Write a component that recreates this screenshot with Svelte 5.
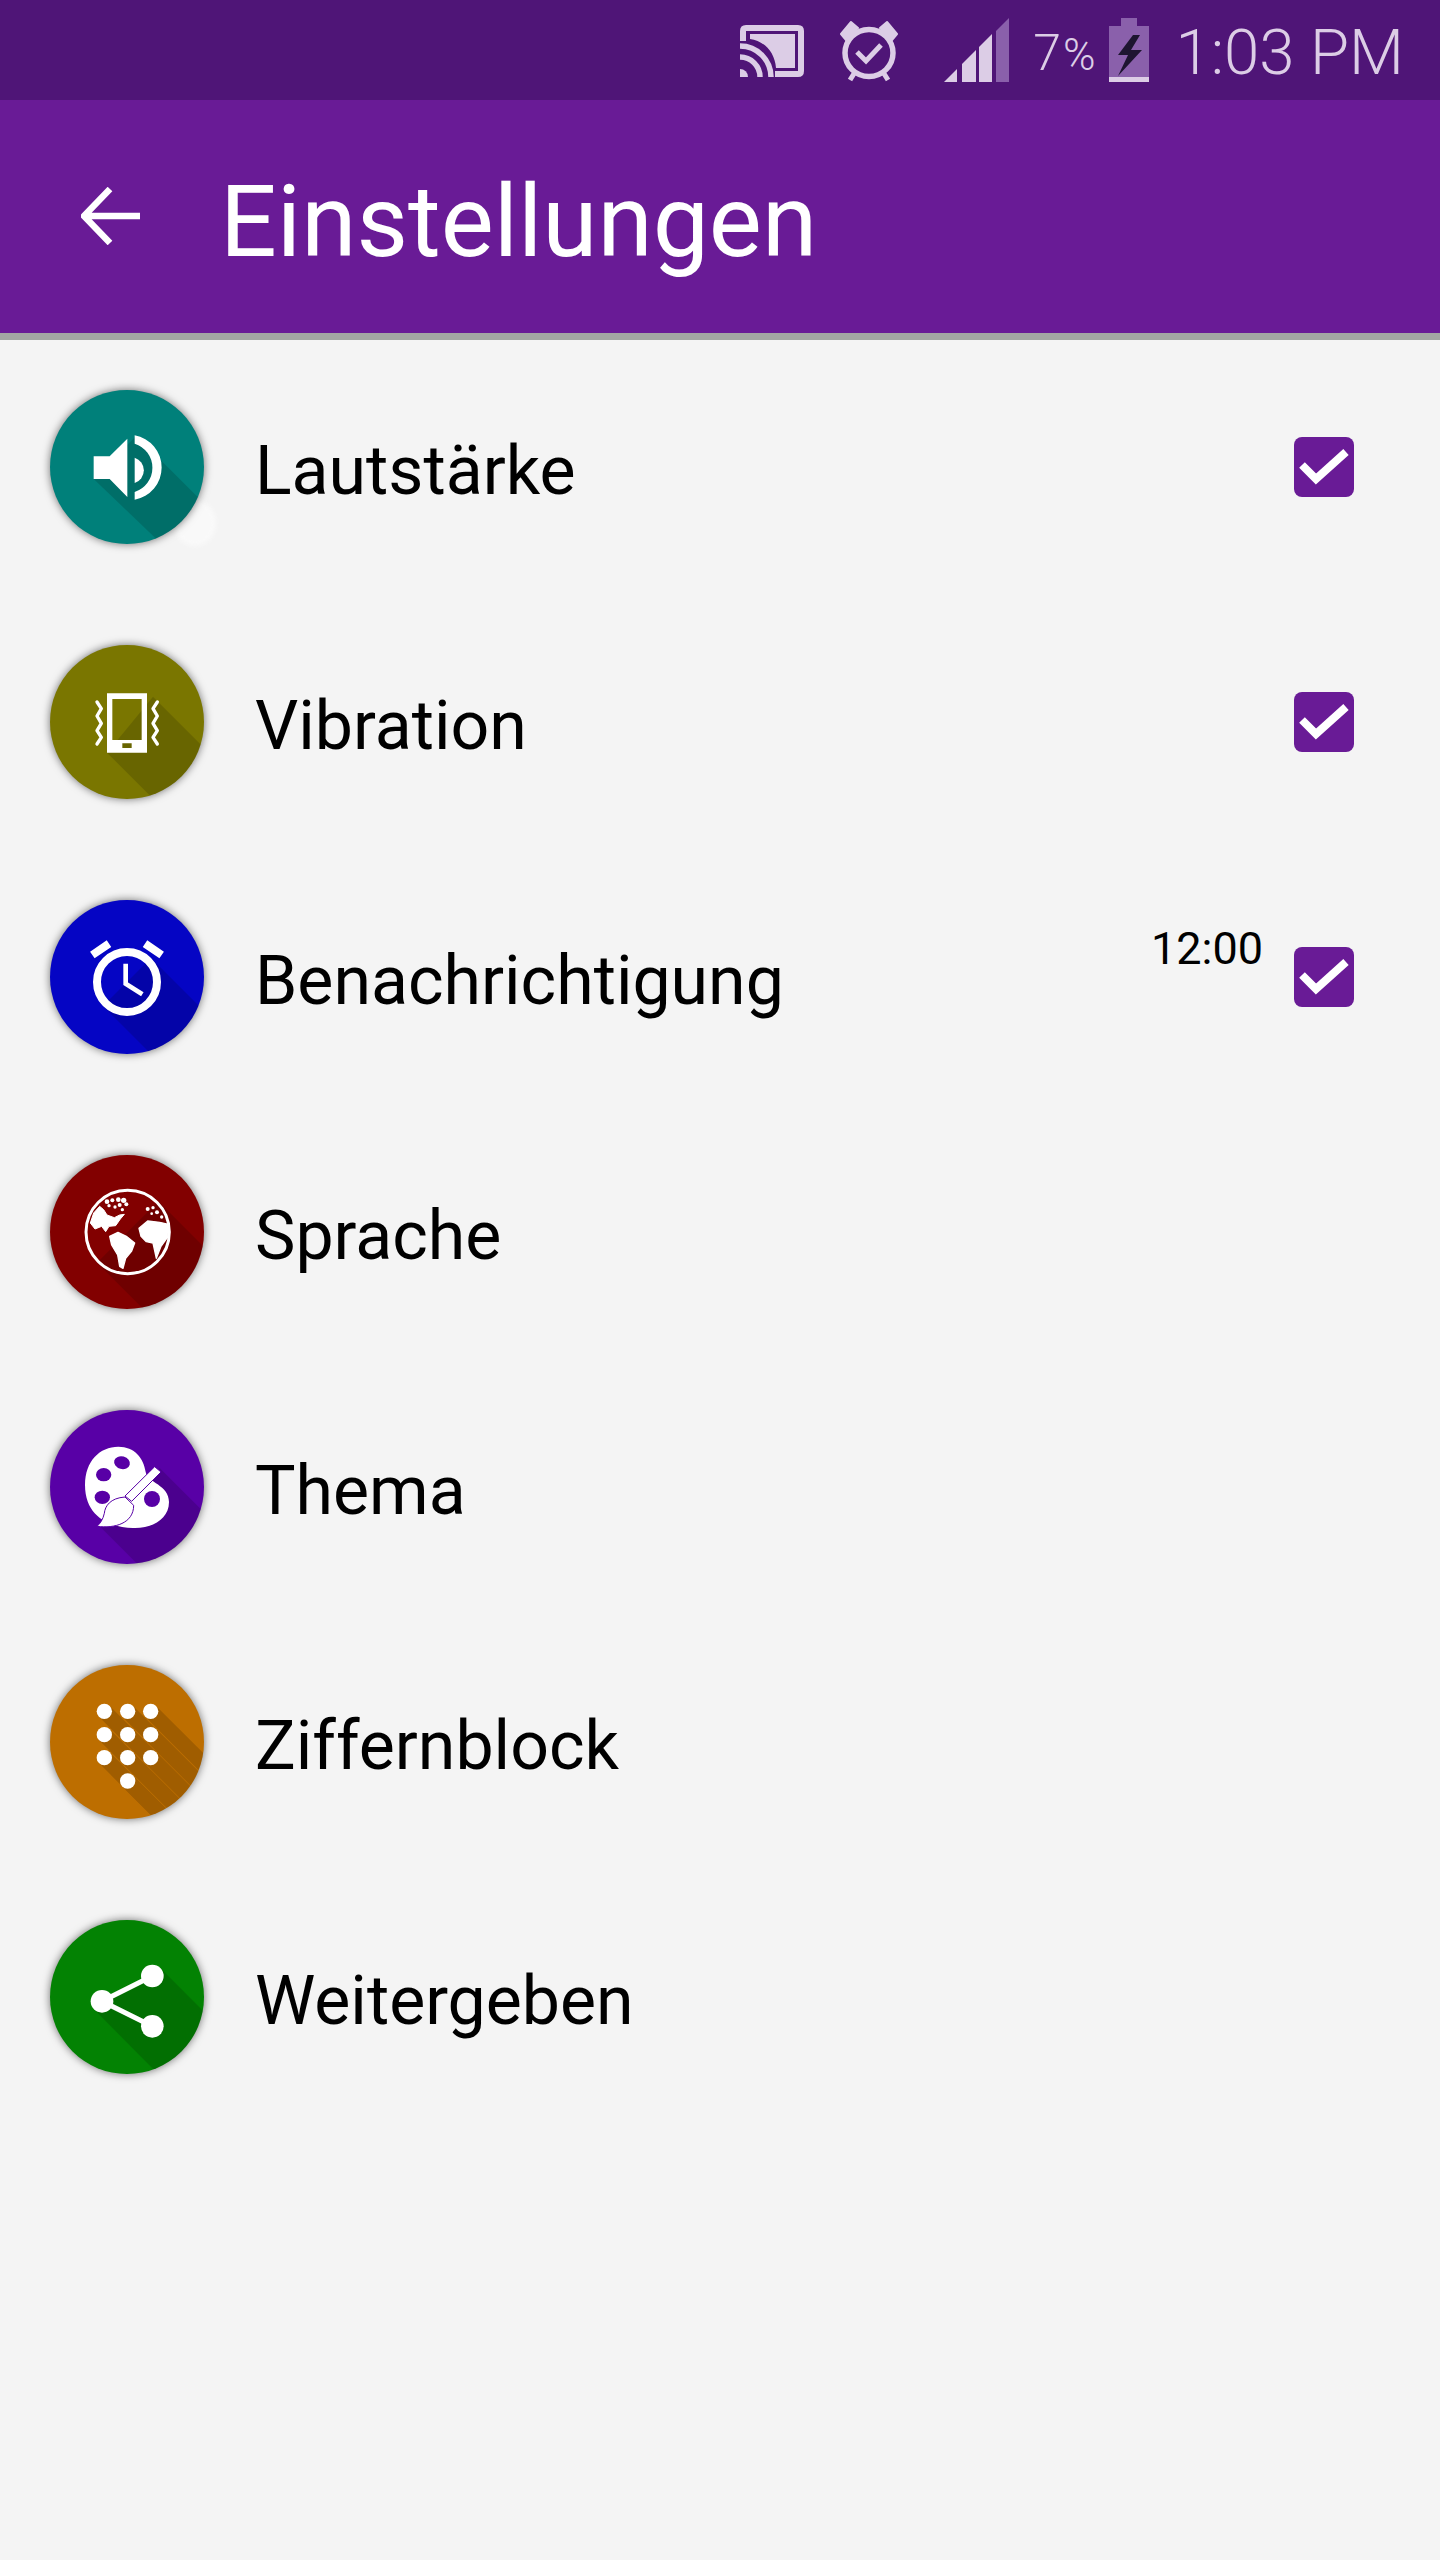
<script>
	// long shadow length in icon units (icon units are 1/3 px)
	const L = 400;

	const rows = [
		{ id: 'speaker', label: 'Lautstärke', color: '#00807a', box: '91 59', check: true },
		{ id: 'vibrate', label: 'Vibration', color: '#7a7600', box: '91 45', check: true },
		{ id: 'alarm', label: 'Benachrichtigung', color: '#0505c4', box: '91 59', check: true, time: '12:00' },
		{ id: 'globe', label: 'Sprache', color: '#820000', box: '91 76' },
		{ id: 'palette', label: 'Thema', color: '#5800a6', box: '91 76' },
		{ id: 'dial', label: 'Ziffernblock', color: '#bd6e00', box: '91 76' },
		{ id: 'share', label: 'Weitergeben', color: '#038203', box: '91 76' }
	];

	const dots = [
		[254, 215], [324, 215], [393, 215],
		[254, 285], [324, 285], [393, 285],
		[254, 354], [324, 354], [393, 354],
		[324, 424]
	];

	// scattered bits of the far north on the globe
	const specks = [
		[262, 216, 7], [278, 212, 6], [268, 228, 5], [296, 210, 7], [312, 212, 8], [320, 224, 6],
		[300, 226, 6], [286, 232, 5], [308, 240, 5], [384, 238, 6], [400, 234, 5], [412, 248, 6],
		[426, 262, 5], [396, 252, 4]
	];
</script>

<div class="screen">
	<div class="statusbar">
		<svg class="cast" width="64" height="52" viewBox="0 0 64 52">
			<path d="M3 16V6Q3 3 6 3H58Q61 3 61 6V46Q61 49 58 49H35" fill="none" stroke="#dccde6" stroke-width="6" />
			<path d="M10 9H55V43H36C35 28 25 16 10 14Z" fill="#dccde6" />
			<path d="M0 44A8 8 0 0 1 8 52H0Z" fill="#dccde6" />
			<path d="M0 32A20 20 0 0 1 20 52M0 21A31 31 0 0 1 31 52" fill="none" stroke="#dccde6" stroke-width="5.5" />
		</svg>
		<svg class="clock" width="58" height="62" viewBox="0 0 58 62">
			<ellipse cx="29" cy="33" rx="24" ry="23.5" fill="none" stroke="#dccde6" stroke-width="5.5" />
			<path d="M1 14L11 2L18 8L6 20ZM57 14L47 2L40 8L52 20Z" fill="#dccde6" stroke="#dccde6" stroke-linejoin="round" stroke-width="2" />
			<path d="M15 52L10 60M43 52L48 60" stroke="#dccde6" stroke-width="5" />
			<path d="M17 32L26 41L41 25" fill="none" stroke="#dccde6" stroke-width="5" />
		</svg>
		<svg class="signal" width="65" height="64" viewBox="0 0 65 64">
			<path d="M0 64L13 51V64Z" fill="#dccde6" />
			<path d="M18 46L32 32V64H18Z" fill="#dccde6" />
			<path d="M35 29L48 16V64H35Z" fill="#dccde6" />
			<path d="M52 13L65 0V64H52Z" fill="#8a60ab" />
		</svg>
		<span class="percent">7<span class="sign">%</span></span>
		<svg class="battery" width="40" height="64" viewBox="0 0 40 64">
			<path d="M12 0H28V8H40V64H0V8H12Z" fill="#8a60ab" />
			<rect y="59" width="40" height="5" fill="#dccde6" />
			<path d="M24 17L9 37H19L9 58L33 32H22L31 17Z" fill="#1e1530" />
		</svg>
		<span class="time">1:03 PM</span>
	</div>

	<header class="appbar">
		<svg class="back" width="60" height="58" viewBox="0 0 60 58">
			<path d="M59 29H4M29 2L3 29L29 56" fill="none" stroke="#fff" stroke-width="6.5" stroke-linejoin="round" />
		</svg>
		<h1>Einstellungen</h1>
	</header>

	<ul class="list">
		{#each rows as row}
			<li class="row">
				<div class="badge" class:touched={row.id === 'speaker'}>
					<div class="disc" style="background: {row.color}">
						<svg width="154" height="154" viewBox="{row.box} 462 462">
							{#if row.id === 'speaker'}
								<path d="M350 196L{350 + L} {196 + L}L{240 + L} {326 + L}L222 326Z" class="long" />
								<path d="M222 258H270L323 205V380L270 326H222Z" fill="#fff" />
								<path d="M345 195A98 98 0 0 1 345 388V365A76 76 0 0 0 345 220Z" fill="#fff" />
								<path d="M345 262A40 40 0 0 1 345 338Z" fill="#fff" />
							{:else if row.id === 'vibrate'}
								<path d="M400 200L{400 + L} {200 + L}L{262 + L} {368 + L}L262 368Z" class="long" />
								<path d="M262 190H382V368H262ZM278 207V330H366V207ZM308 340V354H336V340Z" fill="#fff" fill-rule="evenodd" />
								<path d="M232 216L245 236L232 258L245 280L232 302L245 322L232 342M413 216L400 236L413 258L400 280L413 302L400 322L413 342" fill="none" stroke="#fff" stroke-width="10" stroke-linecap="round" stroke-linejoin="round" />
							{:else if row.id === 'alarm'}
								<path d="M394 233L{394 + L} {233 + L}L{250 + L} {377 + L}L250 377Z" class="long" />
								<circle cx="322" cy="305" r="90" fill="none" stroke="#fff" stroke-width="24" />
								<path d="M318 250V310L368 342" fill="none" stroke="#fff" stroke-width="14" />
								<path d="M218 224L268 190M426 224L376 190" fill="none" stroke="#fff" stroke-width="24" />
							{:else if row.id === 'globe'}
								<path d="M416 215L{416 + L} {215 + L}L{232 + L} {399 + L}L232 399Z" class="long" />
								<circle cx="324" cy="307" r="125" fill="none" stroke="#fff" stroke-width="9" />
								<path d="M212 280L222 250L240 230L252 240L262 256L284 264L300 256L314 254L302 268L288 288L268 290L258 306L246 290L226 298Z" fill="#fff" stroke="#fff" stroke-width="3" stroke-linejoin="round" />
								<path d="M270 320L295 308L320 320L345 340L336 364L318 386L310 416L300 410L294 376L276 346Z" fill="#fff" stroke="#fff" stroke-width="4" stroke-linejoin="round" />
								<path d="M358 296L384 274L420 278L447 284L444 322L424 350L410 386L400 340L380 336L364 320Z" fill="#fff" stroke="#fff" stroke-width="4" stroke-linejoin="round" />
								{#each specks as [x, y, r]}
									<circle cx={x} cy={y} {r} fill="#fff" />
								{/each}
							{:else if row.id === 'palette'}
								<path d="M420 250L{420 + L} {250 + L}L{240 + L} {425 + L}L240 425Z" class="long" />
								<path d="M196 300C196 230 240 186 296 186C345 186 372 220 378 262C384 295 448 300 448 352C448 405 395 432 340 430C275 428 196 400 196 300Z" fill="#fff" />
								<ellipse cx="307" cy="234" rx="24" ry="19" transform="rotate(15 307 234)" fill={row.color} />
								<ellipse cx="252" cy="270" rx="23" ry="20" fill={row.color} />
								<ellipse cx="248" cy="338" rx="23" ry="20" fill={row.color} />
								<circle cx="397" cy="343" r="24" fill={row.color} />
								<path d="M405 246L424 262L336 350L316 334Z" fill="#fff" stroke={row.color} stroke-width="3" stroke-linejoin="round" />
								<path d="M316 337C272 340 256 364 254 386C250 404 242 416 232 425C285 432 342 416 342 362Z" fill="#fff" stroke={row.color} stroke-width="3" stroke-linejoin="round" />
							{:else if row.id === 'dial'}
								<g opacity="0.15">
									{#each dots as [x, y]}
										<path d="M{x} {y}L{x + L} {y + L}" stroke="#000" stroke-width="46" />
									{/each}
								</g>
								{#each dots as [x, y]}
									<circle cx={x} cy={y} r="23" fill="#fff" />
								{/each}
							{:else}
								<path d="M422 220L{422 + L} {220 + L}L{270 + L} {395 + L}L223 344Z" class="long" />
								<path d="M247 320L398 244M247 320L398 395" stroke="#fff" stroke-width="15" />
								<circle cx="247" cy="320" r="34" fill="#fff" />
								<circle cx="398" cy="244" r="34" fill="#fff" />
								<circle cx="398" cy="395" r="34" fill="#fff" />
							{/if}
						</svg>
					</div>
				</div>
				<span class="label">{row.label}</span>
				{#if row.time}
					<span class="when">{row.time}</span>
				{/if}
				{#if row.check}
					<span class="check">
						<svg width="60" height="60" viewBox="0 0 60 60">
							<path d="M8 28L22 42L52 15" fill="none" stroke="#fff" stroke-width="8" />
						</svg>
					</span>
				{/if}
			</li>
		{/each}
	</ul>
</div>

<style>
	:global(body) {
		margin: 0;
		background: #f4f4f4;
	}

	.screen {
		width: 1440px;
		height: 2560px;
		background: #f4f4f4;
		font-family: Roboto, 'Noto Sans', sans-serif;
		overflow: hidden;
	}

	.statusbar {
		height: 100px;
		background: #4f1577;
		display: flex;
		align-items: flex-start;
		justify-content: flex-end;
		padding-right: 36px;
		box-sizing: border-box;
		color: #dccde6;
	}

	.cast { margin-top: 25px; }
	.clock { margin: 20px 0 0 36px; }
	.signal { margin: 18px 0 0 46px; }

	.percent {
		margin: 24px 0 0 24px;
		font-size: 50px;
		line-height: 58px;
		font-weight: 300;
	}

	.sign {
		font-size: 44px;
		margin-left: 2px;
	}

	.battery { margin: 18px 0 0 14px; }

	.time {
		margin: 15px 0 0 26px;
		font-size: 63.5px;
		line-height: 76px;
		font-weight: 300;
	}

	.appbar {
		height: 233px;
		background: #691b96;
		display: flex;
		align-items: center;
		padding-left: 81px;
		border-bottom: 7px solid #a3a6a3;
	}

	h1 {
		margin: 0 0 0 79px;
		font-size: 100px;
		font-weight: 400;
		color: #fff;
		line-height: 120px;
		position: relative;
		top: 5px;
	}

	.back {
		position: relative;
		top: -1px;
	}

	.list {
		list-style: none;
		margin: -1px 0 0;
		padding: 0;
	}

	.row {
		height: 255px;
		display: flex;
		align-items: center;
		padding: 0 86px 0 50px;
	}

	.badge {
		width: 154px;
		height: 154px;
		position: relative;
		flex: none;
	}

	.touched::before {
		content: '';
		position: absolute;
		left: 124px;
		top: 110px;
		width: 42px;
		height: 46px;
		border-radius: 50%;
		background: #fff;
		opacity: 0.5;
		filter: blur(2px);
	}

	.disc {
		position: relative;
		width: 154px;
		height: 154px;
		border-radius: 50%;
		overflow: hidden;
		box-shadow: 0 0 8px rgba(0, 0, 0, 0.55);
	}

	.disc svg {
		display: block;
	}

	.long {
		fill: #000;
		opacity: 0.14;
	}

	.label {
		margin-left: 51px;
		font-size: 68px;
		color: #000;
		flex: 1;
		position: relative;
		top: 4px;
	}

	.when {
		font-size: 45px;
		color: #000;
		margin: 0 31px 56px 0;
	}

	.check {
		width: 60px;
		height: 60px;
		border-radius: 8px;
		background: #691b96;
		display: block;
	}

	.check svg {
		display: block;
	}
</style>
